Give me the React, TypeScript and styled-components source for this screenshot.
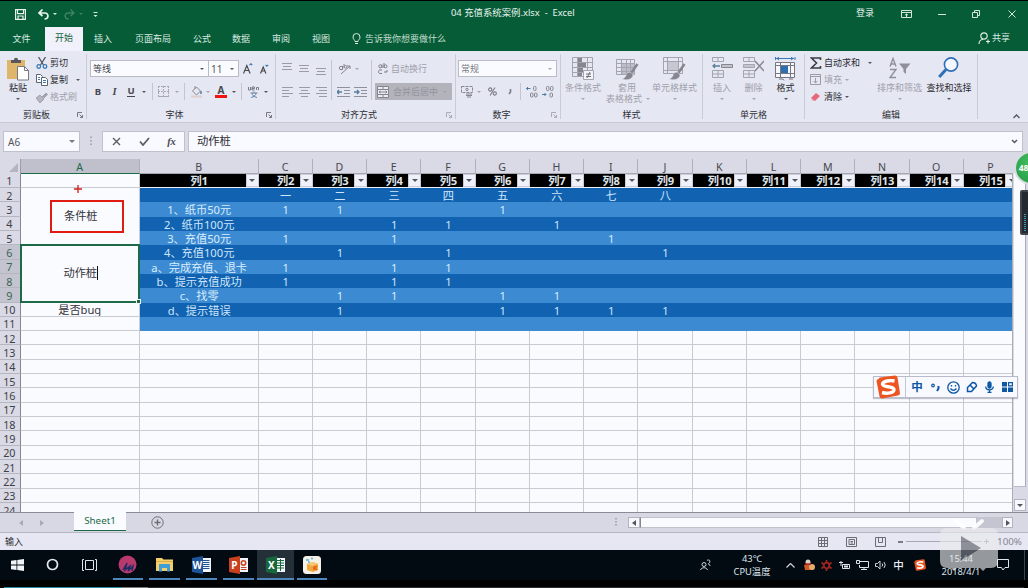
import React from "react";
import styled, { createGlobalStyle, css } from "styled-components";

const GlobalStyle = createGlobalStyle`
  * { box-sizing: border-box; }
  body { margin: 0; overflow: hidden; background: #000; }
`;

const center = css`
  display: flex;
  align-items: center;
  justify-content: center;
`;

const Screen = styled.div`
  position: relative;
  width: 1028px;
  height: 588px;
  overflow: hidden;
  display: flex;
  flex-direction: column;
  background: #000;
  border-top: 1px solid #000;
  font-family: "Noto Sans", "Noto Sans CJK SC", sans-serif;
  font-size: 9px;
  line-height: 12px;
  color: #2b2b30;
  white-space: nowrap;
  svg { display: block; flex: none; }
`;

/* ---------- shared pieces ---------- */
const Slot = styled.div<{ $w: number }>`
  ${center}
  flex: none;
  width: ${(p) => p.$w}px;
`;
const Spacer = styled.div`
  flex: 1;
`;
const Caret = styled.i<{ $c?: string; $s?: number }>`
  flex: none;
  width: 0;
  height: 0;
  border: ${(p) => p.$s ?? 2}px solid transparent;
  border-top-color: ${(p) => p.$c ?? "#55565c"};
  border-bottom-width: 0;
`;

/* ---------- title and tabs ---------- */
const TitleBar = styled.header`
  display: flex;
  align-items: center;
  height: 26px;
  flex: none;
  background: #055c36;
  color: #e9f3ee;
`;
const TitleText = styled.div`
  flex: 1;
  padding-left: 346px;
  padding-bottom: 3px;
  font-size: 9.4px;
`;
const SignIn = styled.div`
  ${center}
  width: 42px;
  padding-bottom: 3px;
`;
const TabBar = styled.nav`
  display: flex;
  height: 24px;
  flex: none;
  background: #055c36;
  color: #dcebe3;
`;
const Tab = styled.div<{ $w: number; $active?: boolean }>`
  ${center}
  width: ${(p) => p.$w}px;
  padding-bottom: ${(p) => (p.$active ? 2 : 1)}px;
  padding-right: ${(p) => (p.$active ? 0 : 2)}px;
  background: ${(p) => (p.$active ? "#f0f1fa" : "transparent")};
  color: ${(p) => (p.$active ? "#176440" : "inherit")};
`;
const TellMe = styled.div`
  display: flex;
  align-items: center;
  gap: 4px;
  padding: 0 0 0 11px;
  color: #c0dccd;
`;
const Share = styled.div`
  display: flex;
  align-items: center;
  gap: 2px;
  padding: 0 18px 2px 0;
`;

/* ---------- ribbon ---------- */
const Ribbon = styled.section`
  display: flex;
  flex: none;
  height: 72px;
  padding: 3px 0;
  background: #e5e7f3;
  border-bottom: 1px solid #c6c8d4;
`;
const Group = styled.div<{ $w: number }>`
  display: flex;
  flex-direction: column;
  flex: none;
  width: ${(p) => p.$w}px;
  border-right: 1px solid #c9cbd7;
`;
const GroupBody = styled.div<{ $pad?: string }>`
  flex: 1;
  display: flex;
  padding: ${(p) => p.$pad ?? "0"};
`;
const GroupLabel = styled.div`
  display: flex;
  align-items: center;
  height: 12px;
  margin-bottom: -2px;
  padding-right: 3px;
  color: #2f3036;
  span { flex: 1; text-align: center; padding-left: 3px; }
  span:not(:last-child) { padding: 0 4px 0 0; }
`;
const Column = styled.div<{ $pad?: string; $gap?: number }>`
  display: flex;
  flex-direction: column;
  flex: none;
  padding: ${(p) => p.$pad ?? "0"};
  gap: ${(p) => p.$gap ?? 0}px;
`;
const Line = styled.div<{ $h?: number }>`
  display: flex;
  align-items: center;
  height: ${(p) => p.$h ?? 17}px;
`;
const VRule = styled.i<{ $h?: number; $m?: string }>`
  flex: none;
  width: 1px;
  height: ${(p) => p.$h ?? 17}px;
  margin: ${(p) => p.$m ?? "0 2px"};
  background: #c3c5d0;
`;
const ScreenEdge = styled(VRule)`
  background: #3d444a;
`;
const Select = styled.div<{ $w: number; $dim?: boolean }>`
  display: flex;
  align-items: center;
  justify-content: space-between;
  width: ${(p) => p.$w}px;
  height: 17px;
  margin-right: -1px;
  padding: 0 4px 0 2px;
  background: #fafbff;
  border: 1px solid #b9bbc6;
  color: ${(p) => (p.$dim ? "#7b7c84" : "#44454b")};
`;
const SmallButton = styled.div<{ $dim?: boolean; $gap?: number }>`
  display: flex;
  align-items: center;
  height: 17.3px;
  color: ${(p) => (p.$dim ? "#a0a1ab" : "#2b2b30")};
  span { margin: 0 ${(p) => p.$gap ?? 5}px 0 2px; }
`;
const BigButton = styled.div<{ $w: number; $dim?: boolean }>`
  display: flex;
  flex-direction: column;
  align-items: center;
  flex: none;
  width: ${(p) => p.$w}px;
  padding-top: 3px;
  line-height: 11px;
  color: ${(p) => (p.$dim ? "#9fa0aa" : "#2b2b30")};
  svg { margin-bottom: 1px; }
  i { margin-top: 5px; }
  em { display: flex; gap: 4px; font-style: normal; margin-right: -2px; }
`;
const Glyph = styled.span<{ $size: number; $italic?: boolean; $under?: string }>`
  font-size: ${(p) => p.$size}px;
  font-weight: 700;
  font-style: ${(p) => (p.$italic ? "italic" : "normal")};
  font-family: ${(p) => (p.$italic ? '"Liberation Serif", serif' : '"Noto Sans", sans-serif')};
  line-height: 10px;
  color: #48494f;
  border-bottom: ${(p) => p.$under ?? "0"};
`;
const MergeButton = styled.div`
  display: flex;
  align-items: center;
  width: 77px;
  height: 17px;
  padding: 0 5px 0 2px;
  gap: 4px;
  background: #b3b4bb;
  color: #92939b;
  span { flex: 1; }
`;

/* ---------- formula bar ---------- */
const FormulaBar = styled.section`
  display: flex;
  flex: none;
  height: 36px;
  padding: 8px 5px 7px 3px;
  background: #d9dae5;
`;
const FieldBox = styled.div<{ $w?: number }>`
  display: flex;
  align-items: center;
  justify-content: space-between;
  ${(p) => (p.$w ? `width:${p.$w}px;` : "flex: 1;")}
  padding: 0 4px;
  background: #f9faff;
  border: 1px solid #bfc1cc;
`;
const NameText = styled.span`
  font-size: 10px;
  color: #55565c;
`;
const FormulaText = styled.span`
  padding: 0 0 2px 4px;
  font-size: 11.3px;
`;

/* ---------- sheet ---------- */
const SheetArea = styled.main`
  display: flex;
  flex: none;
  height: 353px;
  overflow: hidden;
  background: #d9dae5;
`;
const SheetPane = styled.div`
  width: 1012px;
  height: 353px;
  overflow: hidden;
  flex: none;
`;
const COLS = "20.7px 119.1px 118.8px repeat(14, 54.26px)";
const ColumnHeads = styled.div`
  display: grid;
  grid-template-columns: ${COLS};
  height: 14.7px;
  overflow: hidden;
`;
const ColHead = styled.div<{ $sel?: boolean }>`
  ${center}
  padding-top: 2px;
  font-size: 10.6px;
  color: ${(p) => (p.$sel ? "#20694a" : "#46474d")};
  background: ${(p) => (p.$sel ? "#bfc0cb" : "#d9dae5")};
  border-right: 1px solid #aeb0bb;
  border-bottom: 1px solid ${(p) => (p.$sel ? "#1b6b47" : "#a5a7b1")};
`;
const Corner = styled.div`
  display: flex;
  justify-content: flex-end;
  align-items: flex-end;
  padding: 0 2px 2px 0;
  border-right: 1px solid #9b9ca6;
`;
const Cells = styled.div`
  display: grid;
  grid-template-columns: ${COLS};
  grid-template-rows: repeat(24, 14.32px);
`;
const RowHead = styled.div<{ $row: number; $sel?: boolean }>`
  ${center}
  grid-column: 1;
  grid-row: ${(p) => p.$row};
  padding-top: 2px;
  padding-right: 1px;
  font-size: 10.8px;
  color: ${(p) => (p.$sel ? "#3c6454" : "#3f4046")};
  background: ${(p) => (p.$sel ? "#c3c4cf" : "#d9dae5")};
  border-right: 1px solid ${(p) => (p.$sel ? "#1b6b47" : "#85868f")};
  border-bottom: 1px solid #b4b6c0;
`;
type Tone = "plain" | "dark" | "light" | "head";
const TONES: Record<Tone, string> = {
  plain: "background:#fafbff;color:#33343a;border-right:1px solid #c8cad4;border-bottom:1px solid #c8cad4;",
  dark: "background:#1163b1;color:#cfe6fa;",
  light: "background:#3c8ad2;color:#d8edfd;",
  head: "background:#000;color:#dfe3e8;border-bottom:1px solid #eef1f8;font-weight:700;",
};
const Cell = styled.div<{ $row: number; $col: number; $span?: number; $tone: Tone }>`
  ${center}
  position: relative;
  grid-column: ${(p) => p.$col};
  grid-row: ${(p) => p.$row} / span ${(p) => p.$span ?? 1};
  padding-top: 2px;
  font-size: 11.2px;
  line-height: 12px;
  overflow: hidden;
  ${(p) => TONES[p.$tone]}
`;
const ActiveCell = styled(Cell)`
  border: 2px solid #1d6a48;
  margin: -1px 0 0 -1px;
  overflow: visible;
  padding: 0 0 0 2px;
`;
const TextCursor = styled.i`
  width: 1px;
  height: 14px;
  background: #111;
`;
const FillHandle = styled.i`
  position: absolute;
  right: -3px;
  bottom: -3px;
  width: 5px;
  height: 5px;
  background: #1d6a48;
  border: 1px solid #f2f5f8;
`;
const FilterButton = styled.span`
  ${center}
  position: absolute;
  right: 0;
  top: 0;
  width: 13px;
  height: 13px;
  background: #eef0fa;
  border: 1px solid #c9ccd8;
`;
const RedFrame = styled.div`
  ${center}
  width: 74px;
  height: 33px;
  margin: -2px 0 0 15px;
  padding-right: 13px;
  border: 2px solid #e01b10;
`;
const VScroll = styled.aside`
  display: flex;
  flex-direction: column;
  flex: 1;
  margin-top: 14px;
  padding-left: 1px;
  border-left: 1px solid #a9abb5;
`;
const VThumb = styled.div`
  width: 12px;
  height: 314px;
  background: #fafbff;
  border-right: 1px solid #a9abb5;
  border-bottom: 1px solid #b9bbc6;
`;
const ScrollButton = styled.div<{ $w: number; $h: number; $m?: string }>`
  ${center}
  flex: none;
  width: ${(p) => p.$w}px;
  height: ${(p) => p.$h}px;
  margin: ${(p) => p.$m ?? "0"};
  background: #f7f8fe;
  border: 1px solid #b2b4be;
`;

/* ---------- sheet tabs and status ---------- */
const SheetBar = styled.section`
  display: flex;
  flex: none;
  height: 21px;
  background: #d7d8e3;
  border-top: 1px solid #8a8b94;
  border-bottom: 1px solid #b5b7c1;
`;
const SheetTab = styled.div`
  ${center}
  width: 52px;
  height: 19px;
  margin: -1px 25px 0 22px;
  font-size: 9.8px;
  color: #1c6a47;
  background: #fafbff;
  border-bottom: 1px solid #1c6a47;
`;
const SheetBarItems = styled.div`
  display: flex;
  align-items: center;
  flex: 1;
`;
const HTrack = styled.div`
  width: 337px;
  height: 11px;
  background: #fafbff;
  border: 1px solid #c0c2cc;
  border-left: 1px solid #85868f;
`;
const HRest = styled.div`
  width: 25px;
  height: 11px;
  background: #c4c5d0;
`;
const StatusBar = styled.footer`
  display: flex;
  align-items: center;
  flex: none;
  height: 17px;
  padding-left: 5px;
  background: #e6e7f3;
`;
const SliderTrack = styled.i`
  width: 76px;
  height: 1px;
  background: #a5a6b0;
`;
const Zoom = styled.span`
  font-size: 9.8px;
  color: #85868f;
  padding: 0 6px 0 6px;
`;

/* ---------- taskbar ---------- */
const TaskBar = styled.footer`
  display: flex;
  flex: none;
  height: 30px;
  background: #020a12;
  color: #dfe5ea;
`;
const Task = styled.div<{ $w?: number; $active?: boolean }>`
  ${center}
  position: relative;
  width: ${(p) => p.$w ?? 36.8}px;
  padding-bottom: 1px;
  background: ${(p) => (p.$active ? "#233038" : "transparent")};
`;
const OpenMark = styled.i<{ $wide?: boolean }>`
  position: absolute;
  bottom: 0;
  left: ${(p) => (p.$wide ? 0 : 3)}px;
  right: ${(p) => (p.$wide ? 0 : 3)}px;
  height: 2px;
  background: #4c86bd;
`;
const TwoLines = styled.div<{ $w: number }>`
  display: flex;
  flex-direction: column;
  justify-content: center;
  align-items: center;
  width: ${(p) => p.$w}px;
  font-size: 9.3px;
  line-height: 13px;
`;
const InputMode = styled.span`
  font-family: "Noto Sans CJK SC", sans-serif;
  font-size: 10.5px;
  font-weight: 500;
  color: #eef2f5;
`;
const PlayerBar = styled.div`
  display: flex;
  align-items: flex-end;
  height: 8px;
  flex: none;
  padding-left: 4px;
`;
const Segment = styled.i<{ $w: number; $c: string }>`
  width: ${(p) => p.$w}px;
  height: 1px;
  background: ${(p) => p.$c};
`;

/* ---------- floating layers ---------- */
const Float = styled.div<{ $x: number; $y: number }>`
  position: absolute;
  left: ${(p) => p.$x}px;
  top: ${(p) => p.$y - 1}px;
`;
const ImeBar = styled(Float)`
  display: flex;
  align-items: center;
  width: 145px;
  height: 22px;
  padding-left: 2px;
  background: #f7f9fe;
  border: 1px solid #b9bcc8;
  box-shadow: 0 1px 1px rgba(60, 60, 80, 0.3);
`;
const ImeGlyph = styled.b`
  font-size: 11.5px;
  color: #0d57a5;
`;
const Ball = styled(Float)`
  ${center}
  width: 34px;
  height: 34px;
  padding-right: 15px;
  border-radius: 50%;
  border: 2px solid #d7dce0;
  background: radial-gradient(circle at 50% 35%, #45bd62, #239a43);
  color: #fff;
  font-weight: 700;
  font-size: 8.5px;
`;
const Meter = styled(Float)`
  width: 10px;
  height: 45px;
  padding: 22px 0 0 2px;
  background: #23292f;
  border: 2px solid #3f444a;
  border-radius: 2px;
`;
const MeterDots = styled.i`
  display: block;
  width: 2px;
  height: 17px;
  background: repeating-linear-gradient(#3d9aac 0 1px, #23292f 1px 2px);
`;

/* ---------- drawings ---------- */
type SP = { w: number; h: number; c?: string; sw?: number; children: React.ReactNode };
const S = ({ w, h, c = "#8f9099", sw = 1, children }: SP) => (
  <svg width={w} height={h} viewBox={`0 0 ${w} ${h}`} fill="none" stroke={c} strokeWidth={sw}>
    {children}
  </svg>
);
const Launcher = ({ c = "#777881" }: { c?: string }) => (
  <S w={6} h={6} c={c}><path d="M.5 5V.5H5M2.500 2.500l3 3M5.500 3v2.500H3" /></S>
);
const Lines = ({ rows }: { rows: number[][] }) => (
  <S w={12} h={14} c="#9a9ba4">
    {rows.map(([y, a, b]) => <path key={y} d={`M${a} ${y}.5H${b}`} />)}
  </S>
);
const Indent = ({ flip }: { flip?: boolean }) => (
  <S w={13} h={12} c="#8f9099">
    <path d="M0 1.500h13M7 4.500h6M7 7.500h6M0 10.500h13" />
    <path d={flip ? "M0 6h5M3 4l2 2-2 2" : "M5 6H0M2 4 0 6l2 2"} stroke="#587d9d" strokeWidth="1.300" />
  </S>
);
const PasteIcon = () => (
  <svg width="22" height="24" viewBox="0 0 22 24">
    <rect x="0" y="3" width="18" height="19" fill="#dfb56b" />
    <path d="M4 3h3c0-3 4-3 4 0h3v3H4z" fill="#57585e" />
    <path d="M10.500 9.500h7l4 4v9.500h-11z" fill="#fff" stroke="#77787f" />
    <path d="M17.500 9.500v4h4" fill="none" stroke="#77787f" />
  </svg>
);
const CutIcon = () => (
  <S w={12} h={12} c="#55565c" sw={1.300}>
    <path d="M2.500 0l5 8M9.500 0l-5 8" />
    <circle cx="2.800" cy="9.500" r="1.800" stroke="#3b78b5" /><circle cx="9" cy="9.500" r="1.800" stroke="#3b78b5" />
  </S>
);
const CopyIcon = () => (
  <S w={12} h={12} c="#5d6470">
    <path d="M.5.500h4l2 2v6h-6z" fill="#fff" /><path d="M5.500 3.500h4l2 2v6h-6z" fill="#fff" />
    <path d="M2 3.500h2M2 5.500h2M7 6.500h3M7 8.500h3" stroke="#3b78b5" />
  </S>
);
const PainterIcon = () => (
  <S w={12} h={11} c="#a2a3ac"><path d="M0 6l4-3 4 4-4 4z" fill="#b4b5be" /><path d="M6 5l4-4 1.500 1.500L8 6" fill="#a2a3ac" /></S>
);
const GridIcon = () => (
  <S w={11} h={11} c="#a8a9b2"><path d="M0 .5h11M0 5.500h11M.5 0v11M5.500 0v11M10.500 0v11" strokeDasharray="2 1" /><path d="M0 10.500h11" /></S>
);
const BucketIcon = () => (
  <S w={12} h={12} c="#85868f"><path d="M1.500 5l4-4 4 4-4 4zM4 3V0" /><path d="M10 5v3" strokeWidth="2" stroke="#7897b4" /><path d="M0 10.500h11" stroke="#dccfce" strokeWidth="2" /></S>
);
const OrientIcon = () => (
  <S w={13} h={12} c="#85868f"><path d="M3 11l9-8M12 6V3H9" /><circle cx="3" cy="5" r="1.700" /><path d="M4.500 3v4M6 1v4" /><circle cx="7.500" cy="3.800" r="1.400" /></S>
);
const MergeIcon = () => (
  <S w={12} h={12} c="#85868f"><path d="M.5.500h11v11H.5zM.5 3.500h11M.5 8.500h11M6 .5v3M6 8.500v3" fill="#e9eaf2" /><path d="M2 6h8M3.500 4.800 2 6l1.500 1.200M8.500 4.800 10 6 8.500 7.200" /></S>
);
const CurrencyIcon = () => (
  <S w={13} h={12} c="#85868f"><path d="M.5.500h11v6H.5z" strokeDasharray="3 1" /><circle cx="6" cy="3.500" r="1.200" /><path d="M5 8h6M5 9.500h6M6 11h4" strokeWidth="1.200" /></S>
);
const DecimalIcon = ({ more }: { more?: boolean }) => (
  <S w={12} h={12} c="#85868f">
    <path d={more ? "M4.500 2.500H0M2 1 .5 2.500 2 4" : "M0 8.500h4M2.500 7 4 8.500 2.500 10"} stroke="#4c7fa8" />
    {more ? (
      <><rect x="7.500" y=".5" width="2.500" height="4" rx="1" /><rect x="4.500" y="7" width="2.500" height="4" rx="1" /><rect x="8.500" y="7" width="2.500" height="4" rx="1" /></>
    ) : (
      <><rect x="4.500" y=".5" width="2.500" height="4" rx="1" /><rect x="8.500" y=".5" width="2.500" height="4" rx="1" /><rect x="8" y="7" width="2.500" height="4" rx="1" /></>
    )}
  </S>
);
const CondIcon = () => (
  <S w={23} h={24} c="#a3a4ad">
    <path d="M.5.500h20v19H.5zM.5 5.500h20M.5 10.500h20M.5 15.500h20M5.500.500v19M15.500.500v19" />
    <path d="M6 1h4v4H6zM6 6h8v4H6zM6 11h5v4H6zM6 16h4v3H6z" fill="#85868f" stroke="none" />
    <path d="M11.500 13.500h10v9h-10z" fill="#f3f4fb" /><path d="M14 17h5M14 19.500h5M18 15l-3 6" stroke="#6d6e76" />
  </S>
);
const TableIcon = ({ framed }: { framed?: boolean }) => (
  <S w={23} h={24} c="#a3a4ad">
    {framed ? (
      <><path d="M.5.500h19v16H.5zM.5 4.500h19M.5 13.500h19M4.500.500v16M15.500.500v16" /><path d="M5 5h10v8H5z" fill="#c6c7d1" stroke="none" /></>
    ) : (
      <><path d="M5 6h14v11H5z" fill="#bcbdc8" stroke="none" /><path d="M.5 2.500h18v15H.5zM.5 6.500h18M.5 10.500h18M.5 14.500h18M5.500 2.500v15M10.500 2.500v15M14.500 2.500v15" /></>
    )}
    <path d="M21.500 7l-7 10" strokeWidth="2.500" stroke="#85868f" />
    <path d="M15 15.500c-3-1-5 1-5 3-1 2-2 3-4 3.500 5 2 11 0 11-4z" fill="#85868f" stroke="#e5e7f3" strokeWidth=".5" />
  </S>
);
const InsertIcon = ({ del }: { del?: boolean }) => (
  <S w={21} h={24} c="#a3a4ad">
    <path d="M.5.500h11v4H.5zM6 .5v4M.5 13.500h11v7H.5zM6 13.500v7M.5 17h11" />
    {del ? (
      <><path d="M.5 7.500h11v3H.5z" fill="#c3c4ce" /><path d="M12 4l9 10M21 4 12 14" stroke="#85868f" strokeWidth="1.500" /></>
    ) : (
      <><path d="M9.500 7.500h11v3h-11z" fill="#c3c4ce" stroke="#85868f" /><path d="M8 9H1M3 7 1 9l2 2" stroke="#5b7f9c" strokeWidth="1.300" /></>
    )}
  </S>
);
const FormatIcon = () => (
  <S w={21} h={24} c="#77787f">
    <path d="M1 1.500h18M4 0 2 1.500 4 3M16 0l2 1.500L16 3M.5 0v3M20 0v3" stroke="#3b78b5" />
    <path d="M.5 5.500h19v15H.5zM.5 8.500h19M.5 16.500h19M5.500 5.500v15M15.500 5.500v15" fill="#f7f8fe" />
    <path d="M6 9h7v7H6z" fill="#2f6fb0" stroke="none" /><path d="M4 22h4l1 1.500M14 22h4" />
  </S>
);
const SortIcon = () => (
  <svg width="22" height="24" viewBox="0 0 22 24" fill="none" stroke="#8f9099" strokeWidth="1.400">
    <path d="M1 9.500 4 1.500l3 8M2 7h4M1 12.500h6l-6 8h6" />
    <path d="M10 6.500h11.500L17 12v5l-2.500-2v-3z" fill="#8f9099" stroke="none" />
  </svg>
);
const FindIcon = () => (
  <svg width="22" height="24" viewBox="0 0 22 24" fill="none" stroke="#2f6fb5">
    <circle cx="13" cy="7.500" r="6.600" strokeWidth="1.600" fill="#f6f8ff" /><path d="M8 12.500 1.200 20" strokeWidth="3" />
  </svg>
);
const OfficeTile = ({ c, letter, kind }: { c: string; letter: string; kind: "doc" | "deck" | "sheet" }) => (
  <svg width="19" height="18" viewBox="0 0 19 18">
    <rect x="9" y="2" width="10" height="14" fill="#f2f5f9" />
    {kind === "doc" && <path d="M11 4.500h6.500M11 6.500h6.500M11 8.500h6.500M11 10.500h6.500M11 12.500h6.500" stroke={c} />}
    {kind === "sheet" && <path d="M11 4.500h7M11 7h7M11 9.500h7M11 12h7M14.500 3v12" stroke={c} />}
    {kind === "deck" && (
      <><circle cx="14.500" cy="7" r="2.200" fill="none" stroke={c} strokeWidth="1.500" /><path d="M12 11.500h5.500M12 13.500h5.500" stroke={c} /></>
    )}
    <path d="M0 2 11 0v18L0 16z" fill={c} />
    <text x="5.300" y="12.500" fontSize="10" fontWeight="700" textAnchor="middle" fill="#fff" fontFamily="Noto Sans, sans-serif">{letter}</text>
  </svg>
);
const SogouIcon = ({ s }: { s: number }) => (
  <svg width={s} height={s} viewBox="0 0 24 24">
    <path d="M3 4Q2 3 4 2.500L19 .5q2 0 2.500 2L24 18q0 2-2 2.500L6 23.500q-2 0-2.500-2L.5 6q0-1.500 2-2z" fill="#ec5521" />
    <path d="M18.500 6C14 5 7 6 6.500 9c0 4 12 1.500 11.500 6-.5 3-7 4-12 2.500" fill="none" stroke="#fff" strokeWidth="3.400" />
  </svg>
);

/* ---------- data ---------- */
const COL_LETTERS = "ABCDEFGHIJKLMNOP".split("");
const TABLE: { row: number; label: string; cells: Record<number, string> }[] = [
  { row: 2, label: "", cells: { 2: "一", 3: "二", 4: "三", 5: "四", 6: "五", 7: "六", 8: "七", 9: "八" } },
  { row: 3, label: "1、纸币50元", cells: { 2: "1", 3: "1", 6: "1" } },
  { row: 4, label: "2、纸币100元", cells: { 4: "1", 5: "1", 7: "1" } },
  { row: 5, label: "3、充值50元", cells: { 2: "1", 4: "1", 8: "1" } },
  { row: 6, label: "4、充值100元", cells: { 3: "1", 5: "1", 9: "1" } },
  { row: 7, label: "a、完成充值、退卡", cells: { 2: "1", 4: "1", 5: "1" } },
  { row: 8, label: "b、提示充值成功", cells: { 2: "1", 4: "1", 5: "1" } },
  { row: 9, label: "c、找零", cells: { 3: "1", 4: "1", 6: "1", 7: "1" } },
  { row: 10, label: "d、提示错误", cells: { 3: "1", 6: "1", 7: "1", 8: "1", 9: "1" } },
  { row: 11, label: "", cells: {} },
];
const INDEXES = Array.from({ length: 15 }, (_, i) => i + 1);
const ROWS = Array.from({ length: 24 }, (_, i) => i + 1);
const GREY = "#a5a6b0";

const TitleRow = () => (
  <TitleBar>
    <Slot $w={40}><S w={11} h={11} c="#e9f3ee" sw={1.200}><path d="M.6.600h9.800v9.800H.6zM2.500.600v4h6v-4M3 10.400V7h5v3.400" /></S></Slot>
    <Slot $w={7}><S w={12} h={11} c="#e9f3ee" sw={1.700}><path d="M4.500.500 1 4l3.500 3M1 4h6c4 0 4 6-.5 6" /></S></Slot>
    <Slot $w={15}><Caret $c="#dcebe3" /></Slot>
    <Slot $w={14}><S w={12} h={11} c="#3d8262" sw={1.400}><path d="M7.500.500 11 4 7.500 7M11 4H5C1 4 1 10 5.500 10" /></S></Slot>
    <Slot $w={10}><Caret $c="#3d8262" /></Slot>
    <Slot $w={19}><S w={5} h={7} c="#dcebe3"><path d="M.5 1.500h4" /><path d="M.5 4h4l-2 2z" fill="#dcebe3" stroke="none" /></S></Slot>
    <TitleText>04 充值系统案例.xlsx&nbsp; -&nbsp; Excel</TitleText>
    <SignIn>登录</SignIn>
    <Slot $w={41}><S w={11} h={8} c="#d3e6dc"><path d="M.5.500h10v7H.5zM.5 2.500h10M5.500 7V4M4 5.200 5.500 4 7 5.200" /></S></Slot>
    <Slot $w={29}><S w={8} h={1} c="#d3e6dc"><path d="M0 .5h8" /></S></Slot>
    <Slot $w={39}><S w={8} h={8} c="#d3e6dc"><path d="M.5 2.500h5v5h-5zM2.500 2V.5h5v5H6" /></S></Slot>
    <Slot $w={33}><S w={8} h={8} c="#d3e6dc"><path d="M.5.500l7 7M7.500.500l-7 7" /></S></Slot>
  </TitleBar>
);

const TabRow = () => (
  <TabBar>
    <Tab $w={45}>文件</Tab>
    <Tab $w={38} $active>开始</Tab>
    <Tab $w={42}>插入</Tab>
    <Tab $w={58}>页面布局</Tab>
    <Tab $w={40}>公式</Tab>
    <Tab $w={38}>数据</Tab>
    <Tab $w={42}>审阅</Tab>
    <Tab $w={38}>视图</Tab>
    <TellMe>
      <S w={9} h={12} c="#dcebe3"><path d="M3 8.500C3 7 1 6.500 1 4a3.400 3.400 0 0 1 7 0C8 6.500 6 7 6 8.500zM3 10.500h3" /></S>
      告诉我你想要做什么
    </TellMe>
    <Spacer />
    <Share>
      <S w={12} h={13} c="#dcebe3" sw={1.200}><circle cx="6" cy="4" r="3.200" /><path d="M1 12c0-3 2-4.500 4-4.500M8 9.500h4M10 7.500v4" /></S>
      共享
    </Share>
  </TabBar>
);

const RibbonBar = () => (
  <Ribbon>
    <Group $w={87}>
      <GroupBody>
        <BigButton $w={36}><PasteIcon />粘贴<Caret /></BigButton>
        <Column>
          <SmallButton><CutIcon /><span>剪切</span></SmallButton>
          <SmallButton $gap={8}><CopyIcon /><span>复制</span><Caret /></SmallButton>
          <SmallButton $dim><PainterIcon /><span>格式刷</span></SmallButton>
        </Column>
      </GroupBody>
      <GroupLabel><span>剪贴板</span><Launcher /></GroupLabel>
    </Group>

    <Group $w={189}>
      <Column $pad="6px 0 0 3px" $gap={6}>
        <Line>
          <Select $w={119}>等线<Caret /></Select>
          <Select $w={31}><NameText>11</NameText><Caret /></Select>
          <Slot $w={19}><S w={10} h={11} c="#48494f" sw={1.200}><path d="M.5 10.500 3.800 2.500l3.300 8M1.700 7.500h4.200" /><path d="M6.500 2.200 7.900.800l1.400 1.400" stroke="#3b78b5" /></S></Slot>
          <Slot $w={15}><S w={9} h={10} c="#48494f" sw={1.200}><path d="M.5 9.500 3.200 3l2.700 6.500M1.700 7h3" /><path d="M5.500 .8l1.300 1.400L8.100.800" stroke="#3b78b5" /></S></Slot>
        </Line>
        <Line>
          <Slot $w={16}><Glyph $size={9.500}>B</Glyph></Slot>
          <Slot $w={17}><Glyph $size={10.500} $italic>I</Glyph></Slot>
          <Slot $w={16}><Glyph $size={9.500} $under="1px solid #48494f">U</Glyph></Slot>
          <Slot $w={10}><Caret /></Slot>
          <VRule $m="0 2px 0 3px" />
          <Slot $w={17}><GridIcon /></Slot>
          <Slot $w={9}><Caret $c={GREY} /></Slot>
          <VRule $m="0 4px 0 3px" />
          <Slot $w={15}><BucketIcon /></Slot>
          <Slot $w={8}><Caret $c={GREY} /></Slot>
          <Slot $w={18}><Glyph $size={10} $under="3px solid #f01410">&nbsp;A&nbsp;</Glyph></Slot>
          <Slot $w={7}><Caret /></Slot>
          <VRule $m="0 3px 0 4px" />
          <Slot $w={17}><S w={12} h={12} c="#7c7d86"><path d="M.5 1v3h2V1M4 2.500h2.500V1H4v3h2.500M8.500 4V1.500h2V4M5 0l1-.5" /><path d="M2.500 7h7M6 5.500V7M4 7c0 2 2 4 5 4.500M8 7c0 2-2 4-5 4.500" stroke="#6585a3" /></S></Slot>
          <Slot $w={7}><Caret /></Slot>
        </Line>
      </Column>
      <Spacer />
      <GroupLabel><span>字体</span><Launcher /></GroupLabel>
    </Group>

    <Group $w={180}>
      <GroupBody $pad="6px 0 0 2px">
        <Column $gap={6}>
          <Line>
            <Slot $w={17}><Lines rows={[[1, 1, 11], [4, 2, 10], [7, 1, 11]]} /></Slot>
            <Slot $w={17}><Lines rows={[[3, 1, 11], [6, 2, 10], [9, 1, 11]]} /></Slot>
            <Slot $w={17}><Lines rows={[[6, 1, 11], [9, 2, 10], [12, 1, 11]]} /></Slot>
          </Line>
          <Line>
            <Slot $w={17}><Lines rows={[[2, 1, 12], [5, 1, 8], [8, 1, 12], [11, 1, 8]]} /></Slot>
            <Slot $w={17}><Lines rows={[[2, 1, 12], [5, 3, 10], [8, 1, 12], [11, 3, 10]]} /></Slot>
            <Slot $w={17}><Lines rows={[[2, 1, 12], [5, 4, 12], [8, 1, 12], [11, 4, 12]]} /></Slot>
          </Line>
        </Column>
        <VRule $h={40} $m="0 3px 0 2px" />
        <Column $gap={6}>
          <Line><Slot $w={19}><OrientIcon /></Slot><Slot $w={5}><Caret $c={GREY} /></Slot></Line>
          <Line><Slot $w={17}><Indent /></Slot><Slot $w={17}><Indent flip /></Slot></Line>
        </Column>
        <VRule $h={40} $m="0 3px 0 2px" />
        <Column $gap={6}>
          <Line>
            <Slot $w={16}><S w={10} h={11} c="#7c7d86"><circle cx="2.300" cy="3.300" r="1.500" /><path d="M4 1.500V5M6 0v5" /><circle cx="7.500" cy="3.300" r="1.500" /><path d="M4 7H2C0 7 0 10.500 2 10.500h2M6 9h3V7" /></S></Slot>
            <SmallButton $dim>自动换行</SmallButton>
          </Line>
          <MergeButton><MergeIcon /><span>合并后居中</span><Caret $c="#a0a1aa" /></MergeButton>
        </Column>
      </GroupBody>
      <GroupLabel><span>对齐方式</span><Launcher c="#a9aab4" /></GroupLabel>
    </Group>

    <Group $w={105}>
      <Column $pad="6px 0 0 2px" $gap={6}>
        <Line><Select $w={99} $dim>常规<Caret $c={GREY} /></Select></Line>
        <Line>
          <Slot $w={18}><CurrencyIcon /></Slot>
          <Slot $w={6}><Caret $c={GREY} /></Slot>
          <Slot $w={21}><S w={9} h={9} c="#7c7d86" sw={1.100}><circle cx="2.200" cy="2.500" r="1.600" /><circle cx="6.800" cy="6.500" r="1.600" /><path d="M7 .5l-5 8" /></S></Slot>
          <Slot $w={13}><S w={4} h={6} c="#7c7d86" sw={1.600}><path d="M2.500 0v3L1 5" /></S></Slot>
          <VRule $m="0 3px 0 4px" />
          <Slot $w={15}><DecimalIcon more /></Slot>
          <Slot $w={17}><DecimalIcon /></Slot>
        </Line>
      </Column>
      <Spacer />
      <GroupLabel><span>数字</span><Launcher c="#a9aab4" /></GroupLabel>
    </Group>

    <Group $w={142}>
      <GroupBody>
        <BigButton $w={44} $dim><CondIcon />条件格式<Caret $c={GREY} /></BigButton>
        <BigButton $w={44} $dim><TableIcon />套用<em>表格格式<Caret $c={GREY} /></em></BigButton>
        <BigButton $w={51} $dim><TableIcon framed />单元格样式<Caret $c={GREY} /></BigButton>
      </GroupBody>
      <GroupLabel><span>样式</span></GroupLabel>
    </Group>

    <Group $w={102}>
      <GroupBody $pad="0 0 0 3px">
        <BigButton $w={32} $dim><InsertIcon />插入<Caret $c={GREY} /></BigButton>
        <BigButton $w={31} $dim><InsertIcon del />删除<Caret $c={GREY} /></BigButton>
        <BigButton $w={33}><FormatIcon />格式<Caret /></BigButton>
      </GroupBody>
      <GroupLabel><span>单元格</span></GroupLabel>
    </Group>

    <Group $w={173}>
      <GroupBody $pad="0 0 0 5px">
        <Column>
          <SmallButton $gap={8}><S w={12} h={12} c="#3c3d43" sw={1.600}><path d="M10.500 3V1H1.500l5 5-5 5h9V9" /></S><span>自动求和</span><Caret /></SmallButton>
          <SmallButton $dim $gap={3}><S w={12} h={12} c="#9a9ba4"><path d="M.5.500h10v10H.5zM.5 2.500h10M5.500 4v5M3.500 7l2 2 2-2" /></S><span>填充</span><Caret $c={GREY} /></SmallButton>
          <SmallButton $gap={3}><svg width="12" height="10" viewBox="0 0 12 10"><path d="M1 6 6 1l4 3-5 5H3z" fill="#e5697d" /><path d="M1 6l4 3H3z" fill="#f4bcc5" /></svg><span>清除</span><Caret /></SmallButton>
        </Column>
        <Slot $w={3} />
        <BigButton $w={49} $dim><SortIcon />排序和筛选<Caret $c={GREY} /></BigButton>
        <BigButton $w={50}><FindIcon />查找和选择<Caret /></BigButton>
      </GroupBody>
      <GroupLabel><span>编辑</span></GroupLabel>
    </Group>
    <Spacer />
    <Column $pad="59px 8px 0 0"><S w={7} h={7} c="#55565c" sw={1.300}><path d="M.5 5l3-3 3 3" /></S></Column>
  </Ribbon>
);

const Formula = () => (
  <FormulaBar>
    <FieldBox $w={77}><NameText>A6</NameText><Caret $s={3} $c="#77787f" /></FieldBox>
    <Slot $w={22}><S w={2} h={11} c="#9a9ba4" sw={1.500}><path d="M1 .5v10" strokeDasharray="1.500 2" /></S></Slot>
    <FieldBox $w={83}>
      <Slot $w={18}><S w={9} h={9} c="#5c5d64" sw={1.400}><path d="M1 1l7 7M8 1 1 8" /></S></Slot>
      <Slot $w={20}><S w={11} h={9} c="#5c5d64" sw={1.800}><path d="M1 4.500 4 8l6-7" /></S></Slot>
      <Slot $w={17}><Glyph $size={10.500} $italic>fx</Glyph></Slot>
    </FieldBox>
    <Slot $w={3} />
    <FieldBox><FormulaText>动作桩</FormulaText><S w={7} h={5} c="#55565c" sw={1.500}><path d="M1 1l2.500 2.500L6 1" /></S></FieldBox>
  </FormulaBar>
);

const Sheet = () => (
  <SheetArea>
    <SheetPane>
      <ColumnHeads>
        <Corner><svg width="9" height="9"><path d="M9 0v9H0z" fill="#b3b4be" /></svg></Corner>
        {COL_LETTERS.map((l) => <ColHead key={l} $sel={l === "A"}>{l}</ColHead>)}
      </ColumnHeads>
      <Cells>
        {ROWS.map((r) => <RowHead key={r} $row={r} $sel={r > 5 && r < 10}>{r}</RowHead>)}
        <Cell $row={1} $col={2} $tone="plain" />
        <Cell $row={2} $col={2} $span={4} $tone="plain"><RedFrame>条件桩</RedFrame></Cell>
        <Cell $row={10} $col={2} $tone="plain">是否bug</Cell>
        {INDEXES.map((i) => (
          <Cell key={i} $row={1} $col={i + 2} $tone="head">列{i}<FilterButton><Caret $s={3} /></FilterButton></Cell>
        ))}
        {TABLE.map(({ row, label, cells }) =>
          INDEXES.map((i) => (
            <Cell key={`${row}-${i}`} $row={row} $col={i + 2} $tone={row % 2 ? "light" : "dark"}>
              {i === 1 ? label : cells[i]}
            </Cell>
          ))
        )}
        <Cell $row={11} $col={2} $tone="plain" />
        {ROWS.slice(11).map((r) =>
          COL_LETTERS.map((l, i) => <Cell key={`${l}${r}`} $row={r} $col={i + 2} $tone="plain" />)
        )}
        <ActiveCell $row={6} $col={2} $span={4} $tone="plain">动作桩<TextCursor /><FillHandle /></ActiveCell>
      </Cells>
    </SheetPane>
    <VScroll>
      <VThumb />
      <Spacer />
      <ScrollButton $w={12} $h={12} $m="0 0 1px 0"><Caret $s={3} /></ScrollButton>
    </VScroll>
  </SheetArea>
);

const Bottom = () => (
  <>
    <SheetBar>
      <Slot $w={42}><svg width="4" height="6"><path d="M4 0v6L0 3z" fill="#a9aab4" /></svg></Slot>
      <Slot $w={0}><svg width="4" height="6"><path d="M0 0v6l4-3z" fill="#a9aab4" /></svg></Slot>
      <Slot $w={10} />
      <SheetTab>Sheet1</SheetTab>
      <SheetBarItems>
        <S w={13} h={13} c="#6b6c74"><circle cx="6.500" cy="6.500" r="5.700" /><path d="M3.500 6.500h6M6.500 3.500v6" strokeWidth="1.400" /></S>
        <Spacer />
        <Slot $w={24}><S w={2} h={9} c="#9a9ba4" sw={1.500}><path d="M1 0v9" strokeDasharray="1.500 1.500" /></S></Slot>
        <ScrollButton $w={12} $h={11}><svg width="4" height="6"><path d="M4 0v6L0 3z" fill="#55565c" /></svg></ScrollButton>
        <HTrack />
        <HRest />
        <ScrollButton $w={11} $h={11} $m="0 15px 0 0"><svg width="4" height="6"><path d="M0 0v6l4-3z" fill="#55565c" /></svg></ScrollButton>
      </SheetBarItems>
    </SheetBar>
    <StatusBar>
      输入
      <Spacer />
      <Slot $w={28}><S w={10} h={10} c="#6b6c74"><path d="M.5.500h9v9h-9zM.5 3.500h9M.5 6.500h9M3.500.500v9M6.500.500v9" /></S></Slot>
      <Slot $w={29}><S w={11} h={10} c="#6b6c74"><path d="M.5.500h10v9H.5zM3 2.500h5.500v5H3zM4.500 4.500H7M4.500 6h2.500" /></S></Slot>
      <Slot $w={28}><S w={11} h={10} c="#6b6c74"><path d="M.5 9.500v-9h10v9zM3.500.500v5M7.500.500v5M3.500 5.500h4" /></S></Slot>
      <Slot $w={12}><S w={5} h={2} c="#55565c" sw={1.500}><path d="M0 1h5" /></S></Slot>
      <SliderTrack />
      <Slot $w={9}><S w={5} h={5} c="#85868f"><path d="M0 2.500h5M2.500 0v5" /></S></Slot>
      <Zoom>100%</Zoom>
    </StatusBar>
  </>
);

const Tasks = () => (
  <TaskBar>
    <Task $w={34}><svg width="13" height="12" viewBox="0 0 13 12"><path d="M0 1.700 5.500 1v4.600H0zM6.300.900 13 0v5.600H6.300zM0 6.400h5.500V11L0 10.300zM6.300 6.400H13V12l-6.700-.9z" fill="#f2f5f8" /></svg></Task>
    <Task $w={37}><S w={13} h={13} c="#e5e9ed" sw={1.700}><circle cx="6.500" cy="6.500" r="5" /></S></Task>
    <Task $w={37}><S w={15} h={12} c="#dfe5ea"><path d="M3.500 1.500h8v9h-8zM2 .5H.5v11H2M13 .5h1.500v11H13" /></S></Task>
    <Slot $w={1.600} />
    <Task>
      <svg width="19" height="19" viewBox="0 0 19 19"><circle cx="9.500" cy="9.500" r="9" fill="#b83a6d" /><path d="M5 15l4-7-2 7 5-4-2 5 5-5-1 5" stroke="#1d2c66" strokeWidth="1.400" fill="none" /></svg>
      <OpenMark />
    </Task>
    <Task>
      <svg width="17" height="15" viewBox="0 0 17 15"><path d="M0 1h6l1.500 1.500H17V14H0z" fill="#f2cf6b" /><path d="M0 4.500h17" stroke="#d9ae45" /><path d="M3 7h11v7.500h-3V11H6v3.500H3z" fill="#3f9ed6" /></svg>
      <OpenMark />
    </Task>
    <Task><OfficeTile c="#1e5299" letter="W" kind="doc" /><OpenMark /></Task>
    <Task><OfficeTile c="#c9401f" letter="P" kind="deck" /><OpenMark /></Task>
    <Task $active><OfficeTile c="#17683d" letter="X" kind="sheet" /><OpenMark $wide /></Task>
    <Task>
      <svg width="18" height="18" viewBox="0 0 18 18"><rect width="18" height="18" rx="3.500" fill="#f5f1e6" /><path d="M4 8l6-2 5 2v6l-5 2-6-2z" fill="#f0a63a" /><path d="M4 8l5 2 6-2-5-2z" fill="#f7c873" /><path d="M11 10v4M14 10l-2.500 2 2.500 2" stroke="#e0601d" fill="none" strokeWidth="1.300" /><path d="M3 4h3M8 2.500h2M5 6h2" stroke="#4cb7dc" strokeWidth="1.500" /></svg>
      <OpenMark />
    </Task>
    <Spacer />
    <Slot $w={22}><S w={11} h={12} c="#cdd4da"><circle cx="4" cy="5.500" r="2" /><path d="M.5 11c.5-3 6.500-3 7 0M7 1.500c3-2 4 2 1.500 3M10 7c0-1.500-1-2-2-2" /></S></Slot>
    <TwoLines $w={72}><span>43℃</span><span>CPU温度</span></TwoLines>
    <Slot $w={5}><S w={9} h={5} c="#cdd4da" sw={1.200}><path d="M.5 4.500l4-4 4 4" /></S></Slot>
    <Slot $w={31}>
      <svg width="12" height="12" viewBox="0 0 12 12"><circle cx="5" cy="3" r="2.500" fill="#d9d2c4" /><path d="M1 6h8l2 5H2z" fill="#cf5a2a" /><circle cx="9" cy="8" r="3" fill="#e5ad67" /><path d="M2 5h6" stroke="#c9241b" strokeWidth="1.500" /></svg>
    </Slot>
    <Slot $w={5}><svg width="11" height="11" viewBox="0 0 11 11" fill="none" stroke="#a12420" strokeWidth="1.800"><circle cx="5.500" cy="5.500" r="2.800" /><path d="M5.500 0v2M5.500 9v2M.5 2.500 2.500 4M10.500 2.500 8.500 4M.5 8.500 2.500 7M10.500 8.500 8.500 7" /></svg></Slot>
    <Slot $w={31}><S w={12} h={9} c="#dfe5ea"><path d="M3.500 3.500h7v4h-7zM0 1.500h4M2 0v5" /><path d="M5 5.500h4" strokeWidth="2" /></S></Slot>
    <Slot $w={5}><S w={13} h={11} c="#dfe5ea"><path d="M4 1.500h8.500v6h-9V5M.5.500h3v3h-3zM5 9.500h6M8 8v2" /></S></Slot>
    <Slot $w={31}><S w={12} h={10} c="#cdd4da"><path d="M.5 3.500h2L5 1v8L2.500 6.500h-2zM7 3.500q1.500 1.500 0 3M9 2q2.500 3 0 6" /></S></Slot>
    <Slot $w={5}><InputMode>中</InputMode></Slot>
    <Slot $w={37}><SogouIcon s={12} /></Slot>
    <TwoLines $w={46}><span>15:44</span><span>2018/4/1</span></TwoLines>
    <Slot $w={38}><S w={13} h={12} c="#dfe5ea"><path d="M.5.500h11v8H8L6 11 4.500 8.500h-4z" /></S></Slot>
    <ScreenEdge $h={30} $m="0 3px 0 2px" />
  </TaskBar>
);

export default function App() {
  return (
    <Screen>
      <GlobalStyle />
      <TitleRow />
      <TabRow />
      <RibbonBar />
      <Formula />
      <Sheet />
      <Bottom />
      <Tasks />
      <PlayerBar>
        <Segment $w={118} $c="#2b8ba5" />
        <Segment $w={26} $c="#77797b" />
        <Segment $w={876} $c="#2b2d2f" />
      </PlayerBar>

      <Float $x={74} $y={185}><S w={8} h={8} c="#d81e1e" sw={1.300}><path d="M4 0v8M0 4h8" /></S></Float>
      <Ball $x={1014} $y={151}>48</Ball>
      <Meter $x={1020} $y={190}><MeterDots /></Meter>
      <ImeBar $x={873} $y={376}>
        <SogouIcon s={24} />
        <VRule $h={20} $m="0 0 0 5px" />
        <Slot $w={22}><ImeGlyph>中</ImeGlyph></Slot>
        <Slot $w={15}><S w={10} h={9} c="#0d57a5" sw={1.200}><circle cx="2" cy="2.500" r="1.300" /><path d="M7.500 3v2.500L6 8" strokeWidth="2" /></S></Slot>
        <Slot $w={20}><S w={13} h={13} c="#0d57a5" sw={1.300}><circle cx="6.500" cy="6.500" r="5.700" /><path d="M3.500 7.500q3 3.500 6 0M4.500 4v1.500M8.500 4v1.500" /></S></Slot>
        <Slot $w={17}><S w={12} h={12} c="#0d57a5" sw={1.500}><path d="M1.500 10.500v-4l5-5q3.500 0 4 3.500l-5 5.500zM4.500 4.500l3 3" /></S></Slot>
        <Slot $w={18}><S w={9} h={12} c="#0d57a5" sw={1.300}><rect x="3" y="1" width="3" height="6" rx="1.500" fill="#0d57a5" /><path d="M.7 5.500c0 4.500 7.600 4.500 7.600 0M4.500 9v2M2.500 11.300h4" /></S></Slot>
        <Slot $w={18}><svg width="11" height="10" viewBox="0 0 11 10" fill="#0d57a5"><path d="M0 0h5v4.500H0zM0 5.500h5V10H0zM6 5.500h5V10H6z" /><path d="M6.600.600h3.800v3.300H6.600z" fill="none" stroke="#0d57a5" strokeWidth="1.200" /></svg></Slot>
      </ImeBar>
      <Float $x={939} $y={518}>
        <svg width="60" height="54" viewBox="0 0 60 54">
          <path d="M17 3l8 7M43 3l-8 7" stroke="#fff" strokeOpacity=".9" strokeWidth="4" strokeLinecap="round" />
          <path fillRule="evenodd" d="M8 10h44q7 0 7 7v26q0 7-7 7h-5l-3 3-3-3H18l-3 3-3-3H8q-7 0-7-7V17q0-7 7-7zM22 18v24l20-12z" fill="#e9e9ec" fillOpacity=".64" />
          <path d="M22 18v24l20-12z" fill="#6f717b" fillOpacity=".75" />
        </svg>
      </Float>
    </Screen>
  );
}
